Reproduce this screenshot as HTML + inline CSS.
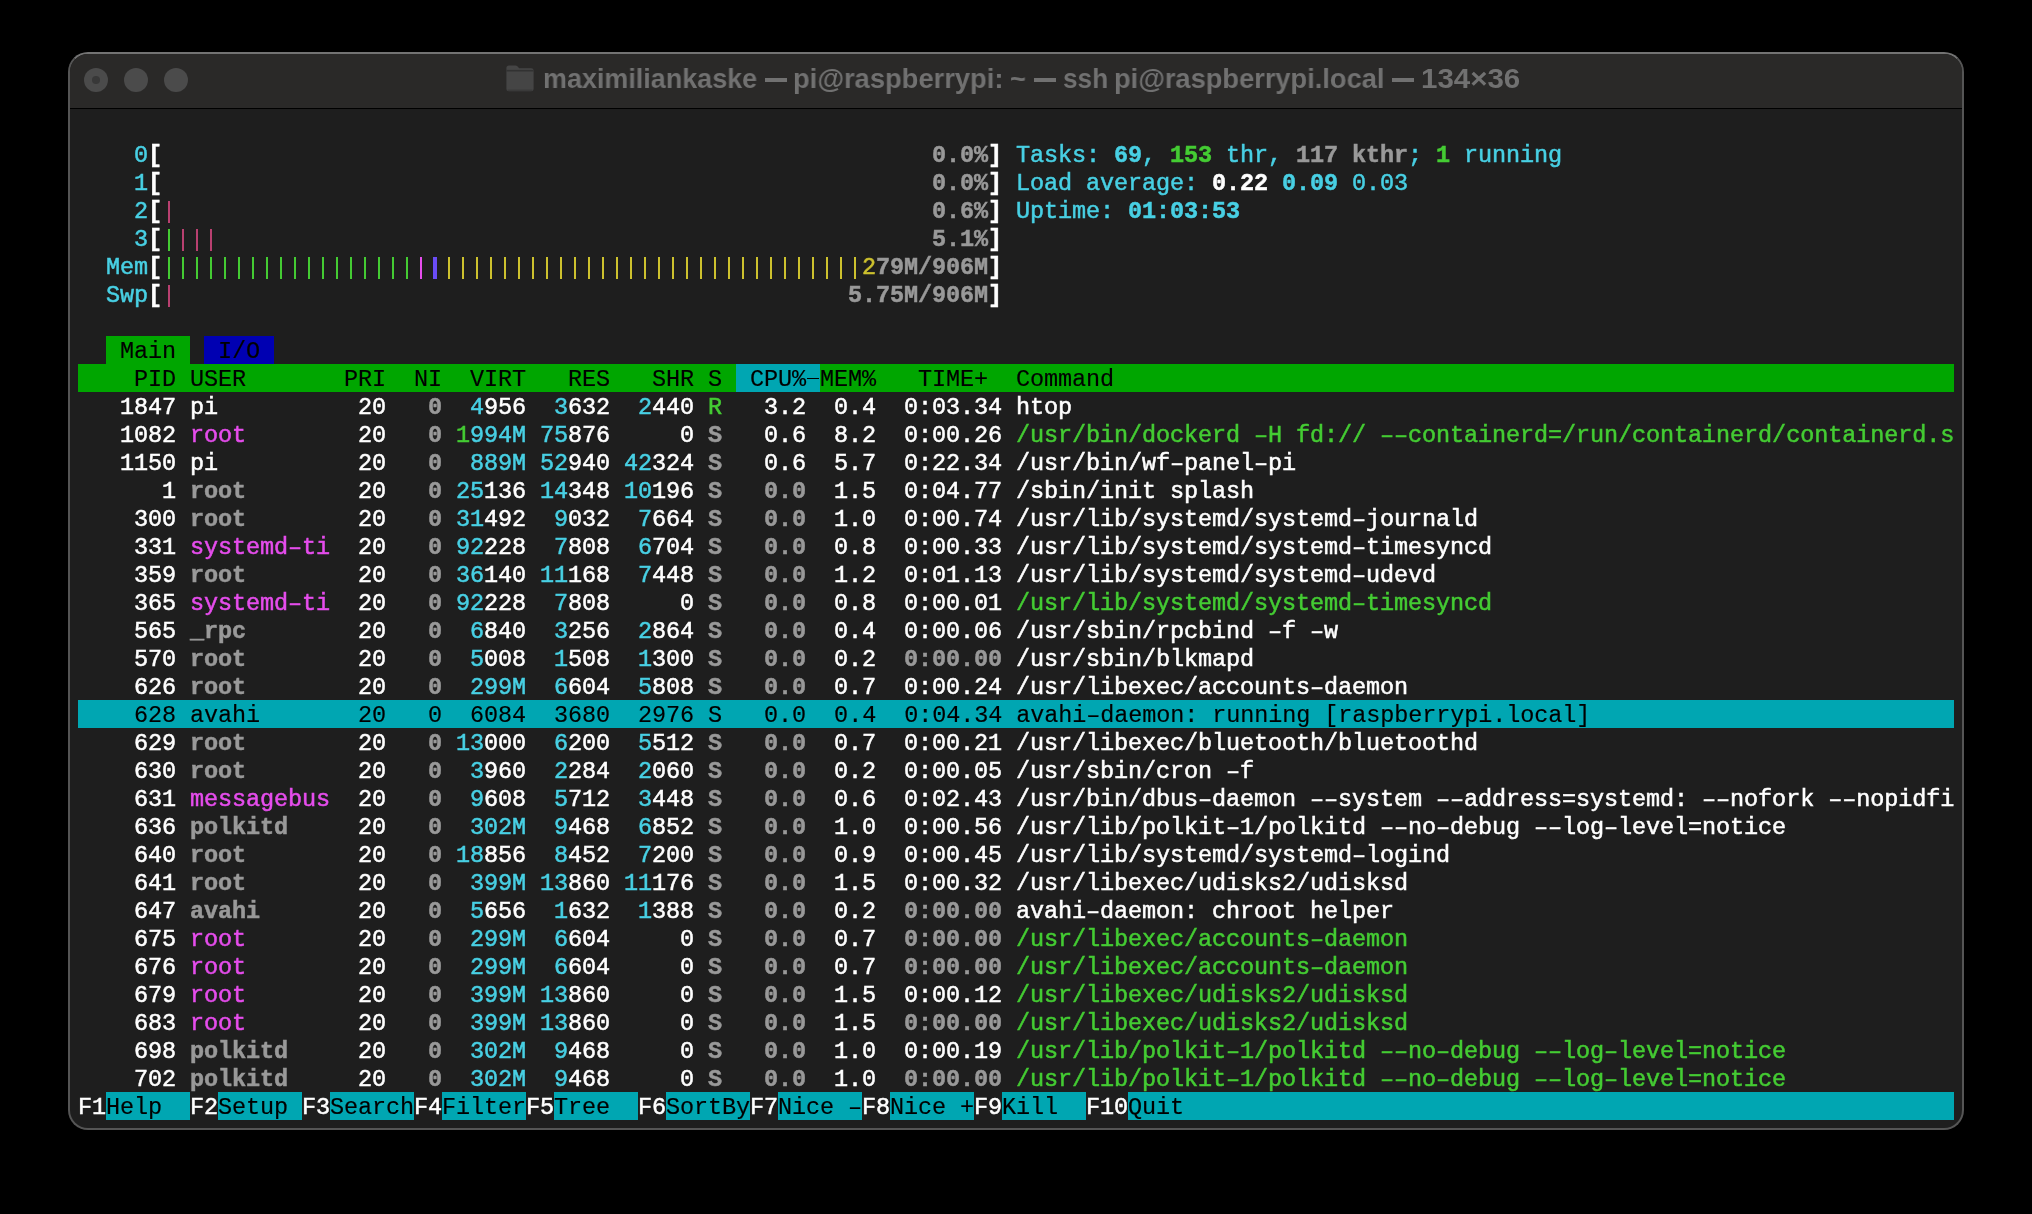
<!DOCTYPE html>
<html><head><meta charset="utf-8">
<style>
html,body{margin:0;padding:0;}
body{width:2032px;height:1214px;background:#000;position:relative;overflow:hidden;}
.win{position:absolute;left:68px;top:52px;width:1896px;height:1078px;border-radius:20px;background:#1e1e1e;box-sizing:border-box;border:2px solid #555;border-top-color:#737373;overflow:hidden;}
.title{position:absolute;left:0;top:0;right:0;height:54px;background:#2a2928;border-bottom:1px solid #000;}
.dot{position:absolute;top:14px;width:24px;height:24px;border-radius:50%;background:#4b4b4b;}
.tt{position:absolute;top:63px;will-change:transform;transform-origin:0 0;font-family:"Liberation Sans",sans-serif;font-weight:bold;font-size:28px;color:#717171;white-space:pre;}
.t{position:absolute;-webkit-text-stroke:0.5px currentColor;font-family:"Liberation Mono",monospace;font-size:23.5px;line-height:28px;letter-spacing:-0.1px;white-space:pre;}
.w{color:#ffffff}
.wb{color:#ffffff;font-weight:bold}
.c{color:#48d0e4}
.cb{color:#48d0e4;font-weight:bold}
.g{color:#44cc33}
.gb{color:#44cc33;font-weight:bold}
.m{color:#e64ded}
.k{color:#999999;font-weight:bold}
.y{color:#cdc12e}
.blk{color:#000;-webkit-text-stroke:0.15px #000}
</style></head><body>
<div class="win">
 <div class="title">
  <div class="dot" style="left:14px"><div style="position:absolute;left:8px;top:8px;width:8px;height:8px;border-radius:50%;background:#383838"></div></div>
  <div class="dot" style="left:54px"></div>
  <div class="dot" style="left:94px"></div>
  <svg style="position:absolute;left:434.5px;top:9.5px" width="30" height="28" viewBox="0 0 30 28"><path d="M1.4 4 Q1.4 1.4 4 1.4 L10.5 1.4 Q11.6 1.4 12.4 2.3 L14.2 4.3 L26.2 4.3 Q28.6 4.3 28.6 6.6 L28.6 25 Q28.6 27.3 26.2 27.3 L3.8 27.3 Q1.4 27.3 1.4 25 Z" fill="#454545"/><rect x="1.4" y="5.9" width="27.2" height="1.6" fill="#323232"/><rect x="2.5" y="25.6" width="25" height="1.2" fill="#383838"/></svg>
 </div>
</div>
<div style="position:absolute;left:106.0px;top:336px;width:84.0px;height:28px;background:#00a600;"></div>
<div style="position:absolute;left:204.0px;top:336px;width:70.0px;height:28px;background:#0000b2;"></div>
<div style="position:absolute;left:78.0px;top:364px;width:1876.0px;height:28px;background:#00a600;"></div>
<div style="position:absolute;left:736.0px;top:364px;width:84.0px;height:28px;background:#00a6b2;"></div>
<div style="position:absolute;left:78.0px;top:700px;width:1876.0px;height:28px;background:#00a6b2;"></div>
<div style="position:absolute;left:106.0px;top:1092px;width:84.0px;height:28px;background:#00a6b2;"></div>
<div style="position:absolute;left:218.0px;top:1092px;width:84.0px;height:28px;background:#00a6b2;"></div>
<div style="position:absolute;left:330.0px;top:1092px;width:84.0px;height:28px;background:#00a6b2;"></div>
<div style="position:absolute;left:442.0px;top:1092px;width:84.0px;height:28px;background:#00a6b2;"></div>
<div style="position:absolute;left:554.0px;top:1092px;width:84.0px;height:28px;background:#00a6b2;"></div>
<div style="position:absolute;left:666.0px;top:1092px;width:84.0px;height:28px;background:#00a6b2;"></div>
<div style="position:absolute;left:778.0px;top:1092px;width:84.0px;height:28px;background:#00a6b2;"></div>
<div style="position:absolute;left:890.0px;top:1092px;width:84.0px;height:28px;background:#00a6b2;"></div>
<div style="position:absolute;left:1002.0px;top:1092px;width:84.0px;height:28px;background:#00a6b2;"></div>
<div style="position:absolute;left:1128.0px;top:1092px;width:826.0px;height:28px;background:#00a6b2;"></div>
<div style="position:absolute;left:807.0px;top:377.6px;width:11.5px;height:1.9px;background:#000;"></div>
<div style="position:absolute;left:167.8px;top:200.5px;width:2.4px;height:22.5px;background:#b94070;"></div>
<div style="position:absolute;left:167.8px;top:228.5px;width:2.4px;height:22.5px;background:#44cc33;"></div>
<div style="position:absolute;left:181.8px;top:228.5px;width:2.4px;height:22.5px;background:#b94070;"></div>
<div style="position:absolute;left:195.8px;top:228.5px;width:2.4px;height:22.5px;background:#b94070;"></div>
<div style="position:absolute;left:209.8px;top:228.5px;width:2.4px;height:22.5px;background:#b94070;"></div>
<div style="position:absolute;left:167.8px;top:256.5px;width:2.4px;height:22.5px;background:#44cc33;"></div>
<div style="position:absolute;left:181.8px;top:256.5px;width:2.4px;height:22.5px;background:#44cc33;"></div>
<div style="position:absolute;left:195.8px;top:256.5px;width:2.4px;height:22.5px;background:#44cc33;"></div>
<div style="position:absolute;left:209.8px;top:256.5px;width:2.4px;height:22.5px;background:#44cc33;"></div>
<div style="position:absolute;left:223.8px;top:256.5px;width:2.4px;height:22.5px;background:#44cc33;"></div>
<div style="position:absolute;left:237.8px;top:256.5px;width:2.4px;height:22.5px;background:#44cc33;"></div>
<div style="position:absolute;left:251.8px;top:256.5px;width:2.4px;height:22.5px;background:#44cc33;"></div>
<div style="position:absolute;left:265.8px;top:256.5px;width:2.4px;height:22.5px;background:#44cc33;"></div>
<div style="position:absolute;left:279.8px;top:256.5px;width:2.4px;height:22.5px;background:#44cc33;"></div>
<div style="position:absolute;left:293.8px;top:256.5px;width:2.4px;height:22.5px;background:#44cc33;"></div>
<div style="position:absolute;left:307.8px;top:256.5px;width:2.4px;height:22.5px;background:#44cc33;"></div>
<div style="position:absolute;left:321.8px;top:256.5px;width:2.4px;height:22.5px;background:#44cc33;"></div>
<div style="position:absolute;left:335.8px;top:256.5px;width:2.4px;height:22.5px;background:#44cc33;"></div>
<div style="position:absolute;left:349.8px;top:256.5px;width:2.4px;height:22.5px;background:#44cc33;"></div>
<div style="position:absolute;left:363.8px;top:256.5px;width:2.4px;height:22.5px;background:#44cc33;"></div>
<div style="position:absolute;left:377.8px;top:256.5px;width:2.4px;height:22.5px;background:#44cc33;"></div>
<div style="position:absolute;left:391.8px;top:256.5px;width:2.4px;height:22.5px;background:#44cc33;"></div>
<div style="position:absolute;left:405.8px;top:256.5px;width:2.4px;height:22.5px;background:#44cc33;"></div>
<div style="position:absolute;left:419.8px;top:256.5px;width:2.4px;height:22.5px;background:#e64ded;"></div>
<div style="position:absolute;left:433.4px;top:256.5px;width:3.2px;height:22.5px;background:#6a4cf5;"></div>
<div style="position:absolute;left:447.8px;top:256.5px;width:2.4px;height:22.5px;background:#cdc12e;"></div>
<div style="position:absolute;left:461.8px;top:256.5px;width:2.4px;height:22.5px;background:#cdc12e;"></div>
<div style="position:absolute;left:475.8px;top:256.5px;width:2.4px;height:22.5px;background:#cdc12e;"></div>
<div style="position:absolute;left:489.8px;top:256.5px;width:2.4px;height:22.5px;background:#cdc12e;"></div>
<div style="position:absolute;left:503.8px;top:256.5px;width:2.4px;height:22.5px;background:#cdc12e;"></div>
<div style="position:absolute;left:517.8px;top:256.5px;width:2.4px;height:22.5px;background:#cdc12e;"></div>
<div style="position:absolute;left:531.8px;top:256.5px;width:2.4px;height:22.5px;background:#cdc12e;"></div>
<div style="position:absolute;left:545.8px;top:256.5px;width:2.4px;height:22.5px;background:#cdc12e;"></div>
<div style="position:absolute;left:559.8px;top:256.5px;width:2.4px;height:22.5px;background:#cdc12e;"></div>
<div style="position:absolute;left:573.8px;top:256.5px;width:2.4px;height:22.5px;background:#cdc12e;"></div>
<div style="position:absolute;left:587.8px;top:256.5px;width:2.4px;height:22.5px;background:#cdc12e;"></div>
<div style="position:absolute;left:601.8px;top:256.5px;width:2.4px;height:22.5px;background:#cdc12e;"></div>
<div style="position:absolute;left:615.8px;top:256.5px;width:2.4px;height:22.5px;background:#cdc12e;"></div>
<div style="position:absolute;left:629.8px;top:256.5px;width:2.4px;height:22.5px;background:#cdc12e;"></div>
<div style="position:absolute;left:643.8px;top:256.5px;width:2.4px;height:22.5px;background:#cdc12e;"></div>
<div style="position:absolute;left:657.8px;top:256.5px;width:2.4px;height:22.5px;background:#cdc12e;"></div>
<div style="position:absolute;left:671.8px;top:256.5px;width:2.4px;height:22.5px;background:#cdc12e;"></div>
<div style="position:absolute;left:685.8px;top:256.5px;width:2.4px;height:22.5px;background:#cdc12e;"></div>
<div style="position:absolute;left:699.8px;top:256.5px;width:2.4px;height:22.5px;background:#cdc12e;"></div>
<div style="position:absolute;left:713.8px;top:256.5px;width:2.4px;height:22.5px;background:#cdc12e;"></div>
<div style="position:absolute;left:727.8px;top:256.5px;width:2.4px;height:22.5px;background:#cdc12e;"></div>
<div style="position:absolute;left:741.8px;top:256.5px;width:2.4px;height:22.5px;background:#cdc12e;"></div>
<div style="position:absolute;left:755.8px;top:256.5px;width:2.4px;height:22.5px;background:#cdc12e;"></div>
<div style="position:absolute;left:769.8px;top:256.5px;width:2.4px;height:22.5px;background:#cdc12e;"></div>
<div style="position:absolute;left:783.8px;top:256.5px;width:2.4px;height:22.5px;background:#cdc12e;"></div>
<div style="position:absolute;left:797.8px;top:256.5px;width:2.4px;height:22.5px;background:#cdc12e;"></div>
<div style="position:absolute;left:811.8px;top:256.5px;width:2.4px;height:22.5px;background:#cdc12e;"></div>
<div style="position:absolute;left:825.8px;top:256.5px;width:2.4px;height:22.5px;background:#cdc12e;"></div>
<div style="position:absolute;left:839.8px;top:256.5px;width:2.4px;height:22.5px;background:#cdc12e;"></div>
<div style="position:absolute;left:853.8px;top:256.5px;width:2.4px;height:22.5px;background:#cdc12e;"></div>
<div style="position:absolute;left:167.8px;top:284.5px;width:2.4px;height:22.5px;background:#b94070;"></div>
<span class="tt" style="left:543.08px;transform:scaleX(0.9618)">maximiliankaske</span>
<span class="tt" style="left:793.05px;transform:scaleX(0.9763)">pi@raspberrypi:</span>
<span class="tt" style="left:1009.53px;transform:scaleX(0.9667)">~</span>
<span class="tt" style="left:1063.07px;transform:scaleX(0.9348)">ssh</span>
<span class="tt" style="left:1114.05px;transform:scaleX(0.9734)">pi@raspberrypi.local</span>
<span class="tt" style="left:1420.95px;transform:scaleX(1.0538)">134×36</span>
<div style="position:absolute;left:765px;top:78.2px;width:21.7px;height:3.6px;background:#717171"></div>
<div style="position:absolute;left:1033.5px;top:78.2px;width:22.4px;height:3.6px;background:#717171"></div>
<div style="position:absolute;left:1392px;top:78.2px;width:21.8px;height:3.6px;background:#717171"></div>
<div style="position:absolute;left:0;top:0;width:2032px;height:1214px;will-change:transform">
<span class="t c" style="left:134.0px;top:142px">0</span>
<span class="t wb" style="left:148.0px;top:142px">[</span>
<span class="t k" style="left:932.0px;top:142px">0.0%</span>
<span class="t wb" style="left:988.0px;top:142px">]</span>
<span class="t c" style="left:1016.0px;top:142px">Tasks: </span>
<span class="t cb" style="left:1114.0px;top:142px">69</span>
<span class="t c" style="left:1142.0px;top:142px">, </span>
<span class="t gb" style="left:1170.0px;top:142px">153</span>
<span class="t c" style="left:1212.0px;top:142px"> thr, </span>
<span class="t k" style="left:1296.0px;top:142px">117 kthr</span>
<span class="t c" style="left:1408.0px;top:142px">; </span>
<span class="t gb" style="left:1436.0px;top:142px">1</span>
<span class="t c" style="left:1450.0px;top:142px"> running</span>
<span class="t c" style="left:134.0px;top:170px">1</span>
<span class="t wb" style="left:148.0px;top:170px">[</span>
<span class="t k" style="left:932.0px;top:170px">0.0%</span>
<span class="t wb" style="left:988.0px;top:170px">]</span>
<span class="t c" style="left:1016.0px;top:170px">Load average: </span>
<span class="t wb" style="left:1212.0px;top:170px">0.22</span>
<span class="t c" style="left:1268.0px;top:170px"> </span>
<span class="t cb" style="left:1282.0px;top:170px">0.09</span>
<span class="t c" style="left:1338.0px;top:170px"> </span>
<span class="t c" style="left:1352.0px;top:170px">0.03</span>
<span class="t c" style="left:134.0px;top:198px">2</span>
<span class="t wb" style="left:148.0px;top:198px">[</span>
<span class="t k" style="left:932.0px;top:198px">0.6%</span>
<span class="t wb" style="left:988.0px;top:198px">]</span>
<span class="t c" style="left:1016.0px;top:198px">Uptime: </span>
<span class="t cb" style="left:1128.0px;top:198px">01:03:53</span>
<span class="t c" style="left:134.0px;top:226px">3</span>
<span class="t wb" style="left:148.0px;top:226px">[</span>
<span class="t k" style="left:932.0px;top:226px">5.1%</span>
<span class="t wb" style="left:988.0px;top:226px">]</span>
<span class="t c" style="left:106.0px;top:254px">Mem</span>
<span class="t wb" style="left:148.0px;top:254px">[</span>
<span class="t y" style="left:862.0px;top:254px">2</span>
<span class="t k" style="left:876.0px;top:254px">79M/906M</span>
<span class="t wb" style="left:988.0px;top:254px">]</span>
<span class="t c" style="left:106.0px;top:282px">Swp</span>
<span class="t wb" style="left:148.0px;top:282px">[</span>
<span class="t k" style="left:848.0px;top:282px">5.75M/906M</span>
<span class="t wb" style="left:988.0px;top:282px">]</span>
<span class="t blk" style="left:120.0px;top:338px">Main</span>
<span class="t blk" style="left:218.0px;top:338px">I/O</span>
<span class="t blk" style="left:134.0px;top:366px">PID</span>
<span class="t blk" style="left:190.0px;top:366px">USER</span>
<span class="t blk" style="left:344.0px;top:366px">PRI</span>
<span class="t blk" style="left:414.0px;top:366px">NI</span>
<span class="t blk" style="left:470.0px;top:366px">VIRT</span>
<span class="t blk" style="left:568.0px;top:366px">RES</span>
<span class="t blk" style="left:652.0px;top:366px">SHR</span>
<span class="t blk" style="left:708.0px;top:366px">S</span>
<span class="t blk" style="left:750.0px;top:366px">CPU%</span>
<span class="t blk" style="left:820.0px;top:366px">MEM%</span>
<span class="t blk" style="left:918.0px;top:366px">TIME+</span>
<span class="t blk" style="left:1016.0px;top:366px">Command</span>
<span class="t w" style="left:120.0px;top:394px">1847</span>
<span class="t w" style="left:190.0px;top:394px">pi</span>
<span class="t w" style="left:358.0px;top:394px">20</span>
<span class="t k" style="left:428.0px;top:394px">0</span>
<span class="t c" style="left:470.0px;top:394px">4</span>
<span class="t w" style="left:484.0px;top:394px">956</span>
<span class="t c" style="left:554.0px;top:394px">3</span>
<span class="t w" style="left:568.0px;top:394px">632</span>
<span class="t c" style="left:638.0px;top:394px">2</span>
<span class="t w" style="left:652.0px;top:394px">440</span>
<span class="t g" style="left:708.0px;top:394px">R</span>
<span class="t w" style="left:764.0px;top:394px">3.2</span>
<span class="t w" style="left:834.0px;top:394px">0.4</span>
<span class="t w" style="left:904.0px;top:394px">0:03.34</span>
<span class="t w" style="left:1016.0px;top:394px">htop</span>
<span class="t w" style="left:120.0px;top:422px">1082</span>
<span class="t m" style="left:190.0px;top:422px">root</span>
<span class="t w" style="left:358.0px;top:422px">20</span>
<span class="t k" style="left:428.0px;top:422px">0</span>
<span class="t g" style="left:456.0px;top:422px">1</span>
<span class="t c" style="left:470.0px;top:422px">994M</span>
<span class="t c" style="left:540.0px;top:422px">75</span>
<span class="t w" style="left:568.0px;top:422px">876</span>
<span class="t w" style="left:680.0px;top:422px">0</span>
<span class="t k" style="left:708.0px;top:422px">S</span>
<span class="t w" style="left:764.0px;top:422px">0.6</span>
<span class="t w" style="left:834.0px;top:422px">8.2</span>
<span class="t w" style="left:904.0px;top:422px">0:00.26</span>
<span class="t g" style="left:1016.0px;top:422px">/usr/bin/dockerd –H fd:// ––containerd=/run/containerd/containerd.s</span>
<span class="t w" style="left:120.0px;top:450px">1150</span>
<span class="t w" style="left:190.0px;top:450px">pi</span>
<span class="t w" style="left:358.0px;top:450px">20</span>
<span class="t k" style="left:428.0px;top:450px">0</span>
<span class="t c" style="left:470.0px;top:450px">889M</span>
<span class="t c" style="left:540.0px;top:450px">52</span>
<span class="t w" style="left:568.0px;top:450px">940</span>
<span class="t c" style="left:624.0px;top:450px">42</span>
<span class="t w" style="left:652.0px;top:450px">324</span>
<span class="t k" style="left:708.0px;top:450px">S</span>
<span class="t w" style="left:764.0px;top:450px">0.6</span>
<span class="t w" style="left:834.0px;top:450px">5.7</span>
<span class="t w" style="left:904.0px;top:450px">0:22.34</span>
<span class="t w" style="left:1016.0px;top:450px">/usr/bin/wf–panel–pi</span>
<span class="t w" style="left:162.0px;top:478px">1</span>
<span class="t k" style="left:190.0px;top:478px">root</span>
<span class="t w" style="left:358.0px;top:478px">20</span>
<span class="t k" style="left:428.0px;top:478px">0</span>
<span class="t c" style="left:456.0px;top:478px">25</span>
<span class="t w" style="left:484.0px;top:478px">136</span>
<span class="t c" style="left:540.0px;top:478px">14</span>
<span class="t w" style="left:568.0px;top:478px">348</span>
<span class="t c" style="left:624.0px;top:478px">10</span>
<span class="t w" style="left:652.0px;top:478px">196</span>
<span class="t k" style="left:708.0px;top:478px">S</span>
<span class="t k" style="left:764.0px;top:478px">0.0</span>
<span class="t w" style="left:834.0px;top:478px">1.5</span>
<span class="t w" style="left:904.0px;top:478px">0:04.77</span>
<span class="t w" style="left:1016.0px;top:478px">/sbin/init splash</span>
<span class="t w" style="left:134.0px;top:506px">300</span>
<span class="t k" style="left:190.0px;top:506px">root</span>
<span class="t w" style="left:358.0px;top:506px">20</span>
<span class="t k" style="left:428.0px;top:506px">0</span>
<span class="t c" style="left:456.0px;top:506px">31</span>
<span class="t w" style="left:484.0px;top:506px">492</span>
<span class="t c" style="left:554.0px;top:506px">9</span>
<span class="t w" style="left:568.0px;top:506px">032</span>
<span class="t c" style="left:638.0px;top:506px">7</span>
<span class="t w" style="left:652.0px;top:506px">664</span>
<span class="t k" style="left:708.0px;top:506px">S</span>
<span class="t k" style="left:764.0px;top:506px">0.0</span>
<span class="t w" style="left:834.0px;top:506px">1.0</span>
<span class="t w" style="left:904.0px;top:506px">0:00.74</span>
<span class="t w" style="left:1016.0px;top:506px">/usr/lib/systemd/systemd–journald</span>
<span class="t w" style="left:134.0px;top:534px">331</span>
<span class="t m" style="left:190.0px;top:534px">systemd–ti</span>
<span class="t w" style="left:358.0px;top:534px">20</span>
<span class="t k" style="left:428.0px;top:534px">0</span>
<span class="t c" style="left:456.0px;top:534px">92</span>
<span class="t w" style="left:484.0px;top:534px">228</span>
<span class="t c" style="left:554.0px;top:534px">7</span>
<span class="t w" style="left:568.0px;top:534px">808</span>
<span class="t c" style="left:638.0px;top:534px">6</span>
<span class="t w" style="left:652.0px;top:534px">704</span>
<span class="t k" style="left:708.0px;top:534px">S</span>
<span class="t k" style="left:764.0px;top:534px">0.0</span>
<span class="t w" style="left:834.0px;top:534px">0.8</span>
<span class="t w" style="left:904.0px;top:534px">0:00.33</span>
<span class="t w" style="left:1016.0px;top:534px">/usr/lib/systemd/systemd–timesyncd</span>
<span class="t w" style="left:134.0px;top:562px">359</span>
<span class="t k" style="left:190.0px;top:562px">root</span>
<span class="t w" style="left:358.0px;top:562px">20</span>
<span class="t k" style="left:428.0px;top:562px">0</span>
<span class="t c" style="left:456.0px;top:562px">36</span>
<span class="t w" style="left:484.0px;top:562px">140</span>
<span class="t c" style="left:540.0px;top:562px">11</span>
<span class="t w" style="left:568.0px;top:562px">168</span>
<span class="t c" style="left:638.0px;top:562px">7</span>
<span class="t w" style="left:652.0px;top:562px">448</span>
<span class="t k" style="left:708.0px;top:562px">S</span>
<span class="t k" style="left:764.0px;top:562px">0.0</span>
<span class="t w" style="left:834.0px;top:562px">1.2</span>
<span class="t w" style="left:904.0px;top:562px">0:01.13</span>
<span class="t w" style="left:1016.0px;top:562px">/usr/lib/systemd/systemd–udevd</span>
<span class="t w" style="left:134.0px;top:590px">365</span>
<span class="t m" style="left:190.0px;top:590px">systemd–ti</span>
<span class="t w" style="left:358.0px;top:590px">20</span>
<span class="t k" style="left:428.0px;top:590px">0</span>
<span class="t c" style="left:456.0px;top:590px">92</span>
<span class="t w" style="left:484.0px;top:590px">228</span>
<span class="t c" style="left:554.0px;top:590px">7</span>
<span class="t w" style="left:568.0px;top:590px">808</span>
<span class="t w" style="left:680.0px;top:590px">0</span>
<span class="t k" style="left:708.0px;top:590px">S</span>
<span class="t k" style="left:764.0px;top:590px">0.0</span>
<span class="t w" style="left:834.0px;top:590px">0.8</span>
<span class="t w" style="left:904.0px;top:590px">0:00.01</span>
<span class="t g" style="left:1016.0px;top:590px">/usr/lib/systemd/systemd–timesyncd</span>
<span class="t w" style="left:134.0px;top:618px">565</span>
<span class="t k" style="left:190.0px;top:618px">_rpc</span>
<span class="t w" style="left:358.0px;top:618px">20</span>
<span class="t k" style="left:428.0px;top:618px">0</span>
<span class="t c" style="left:470.0px;top:618px">6</span>
<span class="t w" style="left:484.0px;top:618px">840</span>
<span class="t c" style="left:554.0px;top:618px">3</span>
<span class="t w" style="left:568.0px;top:618px">256</span>
<span class="t c" style="left:638.0px;top:618px">2</span>
<span class="t w" style="left:652.0px;top:618px">864</span>
<span class="t k" style="left:708.0px;top:618px">S</span>
<span class="t k" style="left:764.0px;top:618px">0.0</span>
<span class="t w" style="left:834.0px;top:618px">0.4</span>
<span class="t w" style="left:904.0px;top:618px">0:00.06</span>
<span class="t w" style="left:1016.0px;top:618px">/usr/sbin/rpcbind –f –w</span>
<span class="t w" style="left:134.0px;top:646px">570</span>
<span class="t k" style="left:190.0px;top:646px">root</span>
<span class="t w" style="left:358.0px;top:646px">20</span>
<span class="t k" style="left:428.0px;top:646px">0</span>
<span class="t c" style="left:470.0px;top:646px">5</span>
<span class="t w" style="left:484.0px;top:646px">008</span>
<span class="t c" style="left:554.0px;top:646px">1</span>
<span class="t w" style="left:568.0px;top:646px">508</span>
<span class="t c" style="left:638.0px;top:646px">1</span>
<span class="t w" style="left:652.0px;top:646px">300</span>
<span class="t k" style="left:708.0px;top:646px">S</span>
<span class="t k" style="left:764.0px;top:646px">0.0</span>
<span class="t w" style="left:834.0px;top:646px">0.2</span>
<span class="t k" style="left:904.0px;top:646px">0:00.00</span>
<span class="t w" style="left:1016.0px;top:646px">/usr/sbin/blkmapd</span>
<span class="t w" style="left:134.0px;top:674px">626</span>
<span class="t k" style="left:190.0px;top:674px">root</span>
<span class="t w" style="left:358.0px;top:674px">20</span>
<span class="t k" style="left:428.0px;top:674px">0</span>
<span class="t c" style="left:470.0px;top:674px">299M</span>
<span class="t c" style="left:554.0px;top:674px">6</span>
<span class="t w" style="left:568.0px;top:674px">604</span>
<span class="t c" style="left:638.0px;top:674px">5</span>
<span class="t w" style="left:652.0px;top:674px">808</span>
<span class="t k" style="left:708.0px;top:674px">S</span>
<span class="t k" style="left:764.0px;top:674px">0.0</span>
<span class="t w" style="left:834.0px;top:674px">0.7</span>
<span class="t w" style="left:904.0px;top:674px">0:00.24</span>
<span class="t w" style="left:1016.0px;top:674px">/usr/libexec/accounts–daemon</span>
<span class="t blk" style="left:78.0px;top:702px">    628 avahi       20   0  6084  3680  2976 S   0.0  0.4  0:04.34 avahi–daemon: running [raspberrypi.local]</span>
<span class="t w" style="left:134.0px;top:730px">629</span>
<span class="t k" style="left:190.0px;top:730px">root</span>
<span class="t w" style="left:358.0px;top:730px">20</span>
<span class="t k" style="left:428.0px;top:730px">0</span>
<span class="t c" style="left:456.0px;top:730px">13</span>
<span class="t w" style="left:484.0px;top:730px">000</span>
<span class="t c" style="left:554.0px;top:730px">6</span>
<span class="t w" style="left:568.0px;top:730px">200</span>
<span class="t c" style="left:638.0px;top:730px">5</span>
<span class="t w" style="left:652.0px;top:730px">512</span>
<span class="t k" style="left:708.0px;top:730px">S</span>
<span class="t k" style="left:764.0px;top:730px">0.0</span>
<span class="t w" style="left:834.0px;top:730px">0.7</span>
<span class="t w" style="left:904.0px;top:730px">0:00.21</span>
<span class="t w" style="left:1016.0px;top:730px">/usr/libexec/bluetooth/bluetoothd</span>
<span class="t w" style="left:134.0px;top:758px">630</span>
<span class="t k" style="left:190.0px;top:758px">root</span>
<span class="t w" style="left:358.0px;top:758px">20</span>
<span class="t k" style="left:428.0px;top:758px">0</span>
<span class="t c" style="left:470.0px;top:758px">3</span>
<span class="t w" style="left:484.0px;top:758px">960</span>
<span class="t c" style="left:554.0px;top:758px">2</span>
<span class="t w" style="left:568.0px;top:758px">284</span>
<span class="t c" style="left:638.0px;top:758px">2</span>
<span class="t w" style="left:652.0px;top:758px">060</span>
<span class="t k" style="left:708.0px;top:758px">S</span>
<span class="t k" style="left:764.0px;top:758px">0.0</span>
<span class="t w" style="left:834.0px;top:758px">0.2</span>
<span class="t w" style="left:904.0px;top:758px">0:00.05</span>
<span class="t w" style="left:1016.0px;top:758px">/usr/sbin/cron –f</span>
<span class="t w" style="left:134.0px;top:786px">631</span>
<span class="t m" style="left:190.0px;top:786px">messagebus</span>
<span class="t w" style="left:358.0px;top:786px">20</span>
<span class="t k" style="left:428.0px;top:786px">0</span>
<span class="t c" style="left:470.0px;top:786px">9</span>
<span class="t w" style="left:484.0px;top:786px">608</span>
<span class="t c" style="left:554.0px;top:786px">5</span>
<span class="t w" style="left:568.0px;top:786px">712</span>
<span class="t c" style="left:638.0px;top:786px">3</span>
<span class="t w" style="left:652.0px;top:786px">448</span>
<span class="t k" style="left:708.0px;top:786px">S</span>
<span class="t k" style="left:764.0px;top:786px">0.0</span>
<span class="t w" style="left:834.0px;top:786px">0.6</span>
<span class="t w" style="left:904.0px;top:786px">0:02.43</span>
<span class="t w" style="left:1016.0px;top:786px">/usr/bin/dbus–daemon ––system ––address=systemd: ––nofork ––nopidfi</span>
<span class="t w" style="left:134.0px;top:814px">636</span>
<span class="t k" style="left:190.0px;top:814px">polkitd</span>
<span class="t w" style="left:358.0px;top:814px">20</span>
<span class="t k" style="left:428.0px;top:814px">0</span>
<span class="t c" style="left:470.0px;top:814px">302M</span>
<span class="t c" style="left:554.0px;top:814px">9</span>
<span class="t w" style="left:568.0px;top:814px">468</span>
<span class="t c" style="left:638.0px;top:814px">6</span>
<span class="t w" style="left:652.0px;top:814px">852</span>
<span class="t k" style="left:708.0px;top:814px">S</span>
<span class="t k" style="left:764.0px;top:814px">0.0</span>
<span class="t w" style="left:834.0px;top:814px">1.0</span>
<span class="t w" style="left:904.0px;top:814px">0:00.56</span>
<span class="t w" style="left:1016.0px;top:814px">/usr/lib/polkit–1/polkitd ––no–debug ––log–level=notice</span>
<span class="t w" style="left:134.0px;top:842px">640</span>
<span class="t k" style="left:190.0px;top:842px">root</span>
<span class="t w" style="left:358.0px;top:842px">20</span>
<span class="t k" style="left:428.0px;top:842px">0</span>
<span class="t c" style="left:456.0px;top:842px">18</span>
<span class="t w" style="left:484.0px;top:842px">856</span>
<span class="t c" style="left:554.0px;top:842px">8</span>
<span class="t w" style="left:568.0px;top:842px">452</span>
<span class="t c" style="left:638.0px;top:842px">7</span>
<span class="t w" style="left:652.0px;top:842px">200</span>
<span class="t k" style="left:708.0px;top:842px">S</span>
<span class="t k" style="left:764.0px;top:842px">0.0</span>
<span class="t w" style="left:834.0px;top:842px">0.9</span>
<span class="t w" style="left:904.0px;top:842px">0:00.45</span>
<span class="t w" style="left:1016.0px;top:842px">/usr/lib/systemd/systemd–logind</span>
<span class="t w" style="left:134.0px;top:870px">641</span>
<span class="t k" style="left:190.0px;top:870px">root</span>
<span class="t w" style="left:358.0px;top:870px">20</span>
<span class="t k" style="left:428.0px;top:870px">0</span>
<span class="t c" style="left:470.0px;top:870px">399M</span>
<span class="t c" style="left:540.0px;top:870px">13</span>
<span class="t w" style="left:568.0px;top:870px">860</span>
<span class="t c" style="left:624.0px;top:870px">11</span>
<span class="t w" style="left:652.0px;top:870px">176</span>
<span class="t k" style="left:708.0px;top:870px">S</span>
<span class="t k" style="left:764.0px;top:870px">0.0</span>
<span class="t w" style="left:834.0px;top:870px">1.5</span>
<span class="t w" style="left:904.0px;top:870px">0:00.32</span>
<span class="t w" style="left:1016.0px;top:870px">/usr/libexec/udisks2/udisksd</span>
<span class="t w" style="left:134.0px;top:898px">647</span>
<span class="t k" style="left:190.0px;top:898px">avahi</span>
<span class="t w" style="left:358.0px;top:898px">20</span>
<span class="t k" style="left:428.0px;top:898px">0</span>
<span class="t c" style="left:470.0px;top:898px">5</span>
<span class="t w" style="left:484.0px;top:898px">656</span>
<span class="t c" style="left:554.0px;top:898px">1</span>
<span class="t w" style="left:568.0px;top:898px">632</span>
<span class="t c" style="left:638.0px;top:898px">1</span>
<span class="t w" style="left:652.0px;top:898px">388</span>
<span class="t k" style="left:708.0px;top:898px">S</span>
<span class="t k" style="left:764.0px;top:898px">0.0</span>
<span class="t w" style="left:834.0px;top:898px">0.2</span>
<span class="t k" style="left:904.0px;top:898px">0:00.00</span>
<span class="t w" style="left:1016.0px;top:898px">avahi–daemon: chroot helper</span>
<span class="t w" style="left:134.0px;top:926px">675</span>
<span class="t m" style="left:190.0px;top:926px">root</span>
<span class="t w" style="left:358.0px;top:926px">20</span>
<span class="t k" style="left:428.0px;top:926px">0</span>
<span class="t c" style="left:470.0px;top:926px">299M</span>
<span class="t c" style="left:554.0px;top:926px">6</span>
<span class="t w" style="left:568.0px;top:926px">604</span>
<span class="t w" style="left:680.0px;top:926px">0</span>
<span class="t k" style="left:708.0px;top:926px">S</span>
<span class="t k" style="left:764.0px;top:926px">0.0</span>
<span class="t w" style="left:834.0px;top:926px">0.7</span>
<span class="t k" style="left:904.0px;top:926px">0:00.00</span>
<span class="t g" style="left:1016.0px;top:926px">/usr/libexec/accounts–daemon</span>
<span class="t w" style="left:134.0px;top:954px">676</span>
<span class="t m" style="left:190.0px;top:954px">root</span>
<span class="t w" style="left:358.0px;top:954px">20</span>
<span class="t k" style="left:428.0px;top:954px">0</span>
<span class="t c" style="left:470.0px;top:954px">299M</span>
<span class="t c" style="left:554.0px;top:954px">6</span>
<span class="t w" style="left:568.0px;top:954px">604</span>
<span class="t w" style="left:680.0px;top:954px">0</span>
<span class="t k" style="left:708.0px;top:954px">S</span>
<span class="t k" style="left:764.0px;top:954px">0.0</span>
<span class="t w" style="left:834.0px;top:954px">0.7</span>
<span class="t k" style="left:904.0px;top:954px">0:00.00</span>
<span class="t g" style="left:1016.0px;top:954px">/usr/libexec/accounts–daemon</span>
<span class="t w" style="left:134.0px;top:982px">679</span>
<span class="t m" style="left:190.0px;top:982px">root</span>
<span class="t w" style="left:358.0px;top:982px">20</span>
<span class="t k" style="left:428.0px;top:982px">0</span>
<span class="t c" style="left:470.0px;top:982px">399M</span>
<span class="t c" style="left:540.0px;top:982px">13</span>
<span class="t w" style="left:568.0px;top:982px">860</span>
<span class="t w" style="left:680.0px;top:982px">0</span>
<span class="t k" style="left:708.0px;top:982px">S</span>
<span class="t k" style="left:764.0px;top:982px">0.0</span>
<span class="t w" style="left:834.0px;top:982px">1.5</span>
<span class="t w" style="left:904.0px;top:982px">0:00.12</span>
<span class="t g" style="left:1016.0px;top:982px">/usr/libexec/udisks2/udisksd</span>
<span class="t w" style="left:134.0px;top:1010px">683</span>
<span class="t m" style="left:190.0px;top:1010px">root</span>
<span class="t w" style="left:358.0px;top:1010px">20</span>
<span class="t k" style="left:428.0px;top:1010px">0</span>
<span class="t c" style="left:470.0px;top:1010px">399M</span>
<span class="t c" style="left:540.0px;top:1010px">13</span>
<span class="t w" style="left:568.0px;top:1010px">860</span>
<span class="t w" style="left:680.0px;top:1010px">0</span>
<span class="t k" style="left:708.0px;top:1010px">S</span>
<span class="t k" style="left:764.0px;top:1010px">0.0</span>
<span class="t w" style="left:834.0px;top:1010px">1.5</span>
<span class="t k" style="left:904.0px;top:1010px">0:00.00</span>
<span class="t g" style="left:1016.0px;top:1010px">/usr/libexec/udisks2/udisksd</span>
<span class="t w" style="left:134.0px;top:1038px">698</span>
<span class="t k" style="left:190.0px;top:1038px">polkitd</span>
<span class="t w" style="left:358.0px;top:1038px">20</span>
<span class="t k" style="left:428.0px;top:1038px">0</span>
<span class="t c" style="left:470.0px;top:1038px">302M</span>
<span class="t c" style="left:554.0px;top:1038px">9</span>
<span class="t w" style="left:568.0px;top:1038px">468</span>
<span class="t w" style="left:680.0px;top:1038px">0</span>
<span class="t k" style="left:708.0px;top:1038px">S</span>
<span class="t k" style="left:764.0px;top:1038px">0.0</span>
<span class="t w" style="left:834.0px;top:1038px">1.0</span>
<span class="t w" style="left:904.0px;top:1038px">0:00.19</span>
<span class="t g" style="left:1016.0px;top:1038px">/usr/lib/polkit–1/polkitd ––no–debug ––log–level=notice</span>
<span class="t w" style="left:134.0px;top:1066px">702</span>
<span class="t k" style="left:190.0px;top:1066px">polkitd</span>
<span class="t w" style="left:358.0px;top:1066px">20</span>
<span class="t k" style="left:428.0px;top:1066px">0</span>
<span class="t c" style="left:470.0px;top:1066px">302M</span>
<span class="t c" style="left:554.0px;top:1066px">9</span>
<span class="t w" style="left:568.0px;top:1066px">468</span>
<span class="t w" style="left:680.0px;top:1066px">0</span>
<span class="t k" style="left:708.0px;top:1066px">S</span>
<span class="t k" style="left:764.0px;top:1066px">0.0</span>
<span class="t w" style="left:834.0px;top:1066px">1.0</span>
<span class="t k" style="left:904.0px;top:1066px">0:00.00</span>
<span class="t g" style="left:1016.0px;top:1066px">/usr/lib/polkit–1/polkitd ––no–debug ––log–level=notice</span>
<span class="t w" style="left:78.0px;top:1094px">F1</span>
<span class="t blk" style="left:106.0px;top:1094px">Help  </span>
<span class="t w" style="left:190.0px;top:1094px">F2</span>
<span class="t blk" style="left:218.0px;top:1094px">Setup </span>
<span class="t w" style="left:302.0px;top:1094px">F3</span>
<span class="t blk" style="left:330.0px;top:1094px">Search</span>
<span class="t w" style="left:414.0px;top:1094px">F4</span>
<span class="t blk" style="left:442.0px;top:1094px">Filter</span>
<span class="t w" style="left:526.0px;top:1094px">F5</span>
<span class="t blk" style="left:554.0px;top:1094px">Tree  </span>
<span class="t w" style="left:638.0px;top:1094px">F6</span>
<span class="t blk" style="left:666.0px;top:1094px">SortBy</span>
<span class="t w" style="left:750.0px;top:1094px">F7</span>
<span class="t blk" style="left:778.0px;top:1094px">Nice –</span>
<span class="t w" style="left:862.0px;top:1094px">F8</span>
<span class="t blk" style="left:890.0px;top:1094px">Nice +</span>
<span class="t w" style="left:974.0px;top:1094px">F9</span>
<span class="t blk" style="left:1002.0px;top:1094px">Kill  </span>
<span class="t w" style="left:1086.0px;top:1094px">F10</span>
<span class="t blk" style="left:1128.0px;top:1094px">Quit</span>
</div>
</body></html>
